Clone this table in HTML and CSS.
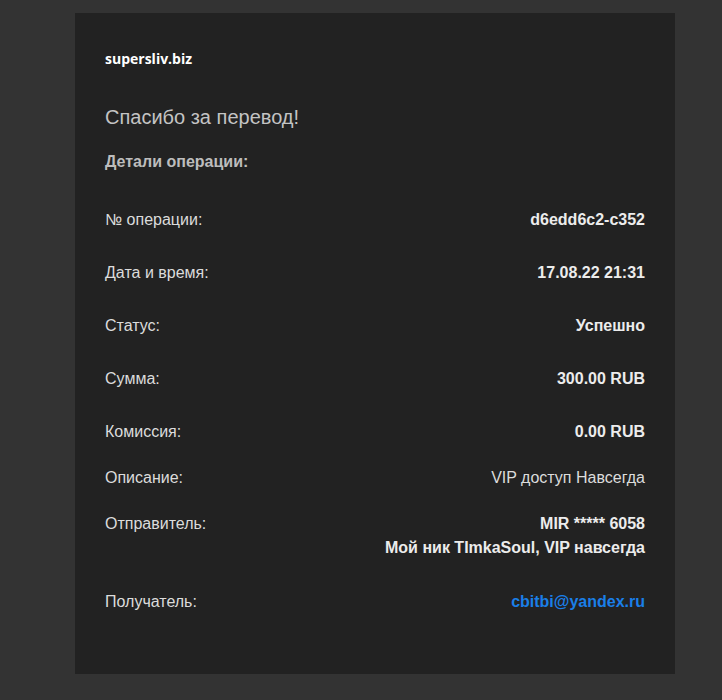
FILE: index.html
```html
<!DOCTYPE html>
<html lang="ru">
<head>
    <meta charset="UTF-8">
    <meta name="viewport" content="width=device-width, initial-scale=1.0">
    <title>Чек перевода</title>
    <link rel="stylesheet" href="styles.css">
</head>
<body>

<div class="page">
    <div class="receipt">
        <div class="brand">supersliv.biz</div>
        <h1>Спасибо за перевод!</h1>
        <h3>Детали операции:</h3>
        <div class="details">
            <div class="row">
                <span class="label">№ операции:</span>
                <span class="value">d6edd6c2-c352</span>
            </div>
            <div class="row">
                <span class="label">Дата и время:</span>
                <span class="value">17.08.22 21:31</span>
            </div>
            <div class="row">
                <span class="label">Статус:</span>
                <span class="value">Успешно</span>
            </div>
            <div class="row">
                <span class="label">Сумма:</span>
                <span class="value">300.00 RUB</span>
            </div>
            <div class="row">
                <span class="label">Комиссия:</span>
                <span class="value">0.00 RUB</span>
            </div>
            <div class="row compact">
                <span class="label">Описание:</span>
                <span class="value plain">VIP доступ Навсегда</span>
            </div>
            <div class="row compact">
                <span class="label">Отправитель:</span>
                <span class="value">MIR ***** 6058<br>Мой ник TImkaSoul, VIP навсегда</span>
            </div>
            <div class="row last">
                <span class="label">Получатель:</span>
                <a class="value link" href="#">cbitbi@yandex.ru</a>
            </div>
        </div>
    </div>
</div>

</body>
</html>
```

FILE: styles.css
```css
body {
    margin: 0;
    background-color: #333333;
    font-family: "Liberation Sans", Arial, sans-serif;
}
.page {
    padding: 13px 0 27px 75px;
}
.receipt {
    width: 540px;
    background: #222222;
    padding: 38px 30px 60px 30px;
}
.brand {
    font-family: "Open Sans", "Segoe UI", sans-serif;
    font-weight: bold;
    font-size: 14px;
    line-height: 16px;
    color: #ffffff;
}
h1 {
    margin: 38px 0 0 0;
    font-size: 20px;
    line-height: 24px;
    font-weight: normal;
    color: #c4c4c4;
}
h3 {
    margin: 24px 0 0 0;
    font-size: 16px;
    line-height: 18px;
    font-weight: bold;
    color: #bdbdbd;
}
.details {
    margin-top: 37px;
}
.row {
    display: flex;
    justify-content: space-between;
    align-items: flex-start;
    font-size: 16px;
    line-height: 24px;
    margin-bottom: 29px;
}
.row.compact {
    margin-bottom: 22px;
}
.row:nth-child(5) {
    margin-bottom: 22px;
}
.row.compact:nth-child(7) {
    margin-bottom: 30px;
}
.row.last {
    margin-bottom: 0;
}
.label {
    color: #dcdcdc;
}
.value {
    text-align: right;
    font-weight: bold;
    color: #ececec;
}
.value.plain {
    font-weight: normal;
    color: #dcdcdc;
}
.value.link {
    color: #1a7fe8;
    text-decoration: none;
}
```
